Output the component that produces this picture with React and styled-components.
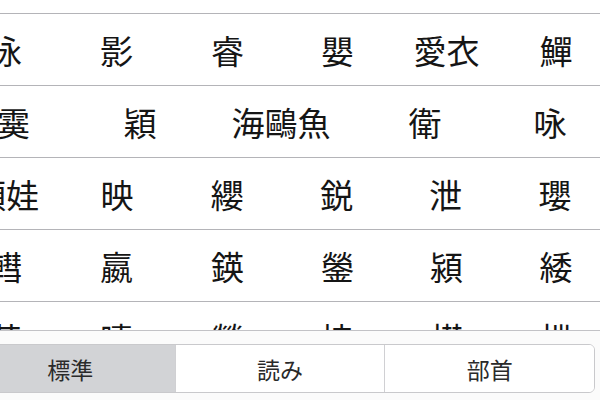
import React from 'react'
import styled, { createGlobalStyle } from 'styled-components'

const GlobalStyle = createGlobalStyle`
  html, body {
    margin: 0;
    padding: 0;
    background: #ffffff;
    overflow: hidden;
  }
  body {
    font-family: "Noto Sans CJK JP", "Noto Sans", sans-serif;
    color: #111;
  }
`

// candidate rows: the list is scrolled, so the first cell of every row starts off screen
const rows = [
  { widths: [111, 111, 111, 109, 109, 110], items: ['泳', '影', '睿', '嬰', '愛衣', '鱓'] },
  { widths: [127, 126, 156, 132, 118], items: ['霙', '穎', '海鷗魚', '衛', '咏'] },
  { widths: [112, 110, 110, 109, 109, 110], items: ['頴娃', '映', '纓', '鋭', '泄', '瓔'] },
  { widths: [111, 111, 111, 109, 109, 110], items: ['轊', '嬴', '鍈', '鎣', '潁', '緌'] },
  { widths: [111, 111, 111, 109, 109, 110], items: ['英', '曀', '瑩', '拽', '楧', '枻'] },
]

const tabs = ['標準', '読み', '部首']

const Screen = styled.div`
  width: 600px;
  height: 400px;
  display: flex;
  flex-direction: column;
  overflow: hidden;
`

const TopGap = styled.div`
  height: 13px;
  flex: none;
`

const Grid = styled.div`
  height: 316px;
  flex: none;
  overflow: hidden;
  border-top: 1px solid #b4b4b8;
`

const Row = styled.div`
  display: flex;
  height: 71px;
  margin-left: -50px;
  border-bottom: 1px solid #b4b4b8;
`

const Cell = styled.div`
  flex: none;
  width: ${p => p.$w}px;
  display: flex;
  align-items: center;
  justify-content: center;
  font-size: 33px;
  font-weight: 400;
  color: #151515;
  white-space: nowrap;
`

const Toolbar = styled.div`
  flex: 1;
  background: #fbfbfb;
  border-top: 1px solid #c2c2c6;
  padding: 13px 5px 0 0;
`

const Segmented = styled.div`
  display: flex;
  height: 49px;
  margin-left: -35px;
  border: 1px solid #c9c9cc;
  border-radius: 6px;
  overflow: hidden;
  box-sizing: border-box;
  background: #ffffff;
`

const Segment = styled.div`
  flex: 1;
  display: flex;
  align-items: center;
  justify-content: center;
  font-size: 23px;
  color: #2a2a2a;
  background: ${p => (p.$active ? '#d2d3d6' : '#ffffff')};
  & + & {
    border-left: 1px solid ${p => (p.$active ? '#d2d3d6' : '#d0d0d3')};
  }
`

export default function App() {
  return (
    <>
      <GlobalStyle />
      <Screen>
        <TopGap />
        <Grid>
          {rows.map((row, r) => (
            <Row key={r}>
              {row.items.map((item, i) => (
                <Cell key={i} $w={row.widths[i]}>{item}</Cell>
              ))}
            </Row>
          ))}
        </Grid>
        <Toolbar>
          <Segmented>
            {tabs.map((t, i) => (
              <Segment key={t} $active={i === 0}>{t}</Segment>
            ))}
          </Segmented>
        </Toolbar>
      </Screen>
    </>
  )
}
